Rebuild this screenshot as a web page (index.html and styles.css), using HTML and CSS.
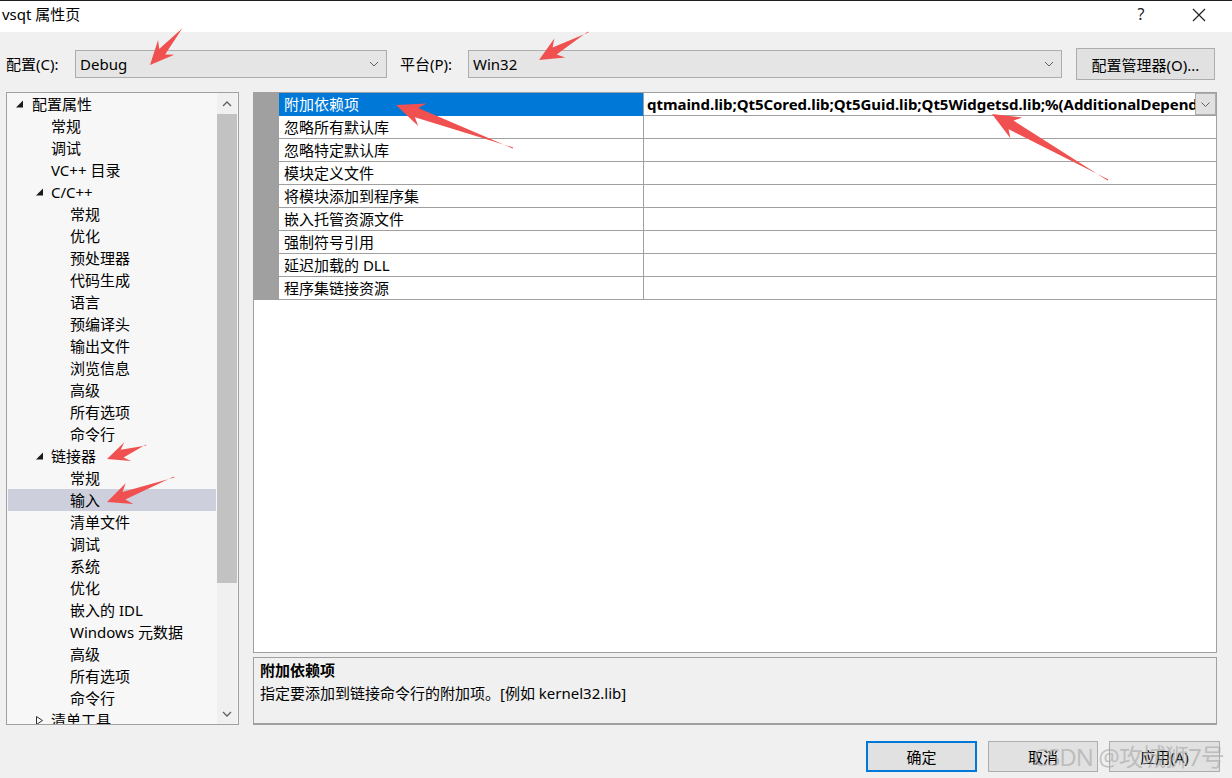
FILE: index.html
```html
<!DOCTYPE html>
<html lang="zh-CN">
<head>
<meta charset="utf-8">
<title>vsqt 属性页</title>
<link rel="stylesheet" href="styles.css">
</head>
<body>
<div class="titlebar">
  <span class="title">vsqt 属性页</span>
  <span class="help">?</span>
  <svg class="close" width="14" height="14" viewBox="0 0 14 14"><path d="M1 1L13 13M13 1L1 13" stroke="#222" stroke-width="1.2" fill="none"/></svg>
</div>

<div class="config-row">
  <span class="lbl lbl-config">配置(C):</span>
  <div class="combo combo-config"><span>Debug</span><svg class="chev" width="10" height="6" viewBox="0 0 10 6"><path d="M1 1L5 5L9 1" stroke="#606060" fill="none"/></svg></div>
  <span class="lbl lbl-platform">平台(P):</span>
  <div class="combo combo-platform"><span>Win32</span><svg class="chev" width="10" height="6" viewBox="0 0 10 6"><path d="M1 1L5 5L9 1" stroke="#606060" fill="none"/></svg></div>
  <button class="btn btn-manager">配置管理器(O)...</button>
</div>

<div class="main">
  <div class="tree">
    <ul class="tree-list">
      <li class="l0"><svg class="tw" width="16" height="8" viewBox="0 0 16 8"><path d="M7 0.5L7 7.5L0 7.5Z" fill="#1a1a1a"/></svg>配置属性</li>
      <li class="l1">常规</li>
      <li class="l1">调试</li>
      <li class="l1">VC++ 目录</li>
      <li class="l1t"><svg class="tw" width="15" height="8" viewBox="0 0 15 8"><path d="M7 0.5L7 7.5L0 7.5Z" fill="#1a1a1a"/></svg>C/C++</li>
      <li class="l2">常规</li>
      <li class="l2">优化</li>
      <li class="l2">预处理器</li>
      <li class="l2">代码生成</li>
      <li class="l2">语言</li>
      <li class="l2">预编译头</li>
      <li class="l2">输出文件</li>
      <li class="l2">浏览信息</li>
      <li class="l2">高级</li>
      <li class="l2">所有选项</li>
      <li class="l2">命令行</li>
      <li class="l1t"><svg class="tw" width="15" height="8" viewBox="0 0 15 8"><path d="M7 0.5L7 7.5L0 7.5Z" fill="#1a1a1a"/></svg>链接器</li>
      <li class="l2">常规</li>
      <li class="l2 selected">输入</li>
      <li class="l2">清单文件</li>
      <li class="l2">调试</li>
      <li class="l2">系统</li>
      <li class="l2">优化</li>
      <li class="l2">嵌入的 IDL</li>
      <li class="l2">Windows 元数据</li>
      <li class="l2">高级</li>
      <li class="l2">所有选项</li>
      <li class="l2">命令行</li>
      <li class="l1t"><svg class="tw" width="15" height="9" viewBox="0 0 15 9"><path d="M0.5 0.5L6.5 4.5L0.5 8.5Z" fill="none" stroke="#333"/></svg>清单工具</li>
    </ul>
    <div class="scrollbar">
      <div class="sb-btn"><svg width="10" height="6" viewBox="0 0 10 6"><path d="M1 5L5 1L9 5" stroke="#606060" stroke-width="1.3" fill="none"/></svg></div>
      <div class="sb-thumb"></div>
      <div class="sb-track"></div>
      <div class="sb-btn"><svg width="10" height="6" viewBox="0 0 10 6"><path d="M1 1L5 5L9 1" stroke="#606060" stroke-width="1.3" fill="none"/></svg></div>
    </div>
  </div>

  <div class="right">
    <div class="grid-panel">
      <div class="grid">
        <div class="row sel">
          <div class="gutter"></div>
          <div class="name">附加依赖项</div>
          <div class="value"><span class="val-text">qtmaind.lib;Qt5Cored.lib;Qt5Guid.lib;Qt5Widgetsd.lib;%(AdditionalDependencies)</span><span class="val-btn"><svg width="9" height="5" viewBox="0 0 9 5"><path d="M0.5 0.5L4.5 4.5L8.5 0.5" stroke="#606060" fill="none"/></svg></span></div>
        </div>
        <div class="row"><div class="gutter"></div><div class="name">忽略所有默认库</div><div class="value"></div></div>
        <div class="row"><div class="gutter"></div><div class="name">忽略特定默认库</div><div class="value"></div></div>
        <div class="row"><div class="gutter"></div><div class="name">模块定义文件</div><div class="value"></div></div>
        <div class="row"><div class="gutter"></div><div class="name">将模块添加到程序集</div><div class="value"></div></div>
        <div class="row"><div class="gutter"></div><div class="name">嵌入托管资源文件</div><div class="value"></div></div>
        <div class="row"><div class="gutter"></div><div class="name">强制符号引用</div><div class="value"></div></div>
        <div class="row"><div class="gutter"></div><div class="name">延迟加载的 DLL</div><div class="value"></div></div>
        <div class="row"><div class="gutter"></div><div class="name">程序集链接资源</div><div class="value"></div></div>
      </div>
    </div>
    <div class="desc">
      <div class="desc-title">附加依赖项</div>
      <div class="desc-text">指定要添加到链接命令行的附加项。[例如 kernel32.lib]</div>
    </div>
  </div>
</div>

<div class="footer">
  <button class="btn btn-ok">确定</button>
  <button class="btn btn-cancel">取消</button>
  <button class="btn btn-apply">应用(A)</button>
</div>

<div class="watermark">CSDN @攻城狮7号</div>

<svg class="annotations" width="1232" height="778" viewBox="0 0 1232 778">
  <g fill="#f0504f">
    <polygon points="182.5,28 181.5,29 159.2,49.0 158.1,39.9 150,65 174.3,54.7 165.1,54.4"/>
    <polygon points="588,31.5 588.5,32.5 552.6,47.6 554.3,38.6 539,60 565.3,57.6 556.6,54.6"/>
    <polygon points="146,444.5 146.3,445.5 120.7,449.8 124.3,442.2 107,459 131.1,461.0 123.5,457.4"/>
    <polygon points="174,476.5 174.3,477.5 122.5,492.0 125.7,483.3 107,502 133.4,503.9 125.3,499.4"/>
    <polygon points="513.3,147.5 512.7,148.5 418.3,107.9 426.4,103.4 396,105 418.2,126.0 414.9,117.3"/>
    <polygon points="1108.4,179.5 1107.6,180.5 1013.6,120.6 1022.2,117.4 992,114 1010.4,138.2 1008.6,129.2"/>
  </g>
</svg>
</body>
</html>
```

FILE: styles.css
```css
* { box-sizing: border-box; }

body {
  margin: 0;
  width: 1232px;
  height: 778px;
  overflow: hidden;
  position: relative;
  background: #f0f0f0;
  font-family: "Noto Sans", "Noto Sans CJK SC", sans-serif;
  font-size: 15px;
  color: #000;
}

/* title bar */
.titlebar {
  height: 32px;
  background: #fff;
  border-top: 1px solid #1e1e1e;
  display: flex;
  align-items: flex-start;
  padding: 2px 0 0 2px;
}
.title { flex: 1; line-height: 22px; }
.help { width: 20px; text-align: center; line-height: 22px; font-size: 16px; margin-right: 41px; color: #222; }
.close { margin-top: 5px; margin-right: 26px; }

/* configuration row */
.config-row {
  margin-top: 16px;
  height: 32px;
  display: flex;
  align-items: center;
  padding-left: 6px;
}
.lbl { line-height: 22px; }
.lbl-config { width: 69px; }
.lbl-platform { width: 68px; margin-left: 13px; }
.combo {
  height: 28px;
  border: 1px solid #adadad;
  background: #e5e5e5;
  display: flex;
  align-items: center;
  justify-content: space-between;
  padding: 0 7px 0 4px;
  line-height: 22px;
}
.combo-config { width: 312px; }
.combo-platform { width: 594px; }
.chev { flex: none; }

.btn {
  font-family: inherit;
  font-size: 15px;
  color: #000;
  background: #e1e1e1;
  border: 1px solid #adadad;
  padding: 0;
  margin: 0;
}
.btn-manager { width: 139px; height: 32px; margin-left: 14px; }

/* main */
.main {
  margin-top: 12px;
  height: 633px;
  display: flex;
  padding-left: 6px;
}

.tree {
  width: 233px;
  height: 633px;
  border: 1px solid #a0a0a0;
  background: #f7f7f7;
  display: flex;
  overflow: hidden;
}
.tree-list {
  list-style: none;
  margin: 0;
  padding: 0 0 0 1px;
  width: 209px;
  flex: none;
  overflow: hidden;
}
.tree-list li {
  height: 22px;
  line-height: 22px;
  white-space: nowrap;
  display: flex;
  align-items: center;
}
.tw { flex: none; }
.l0 { padding-left: 8px; }
.l1t { padding-left: 28px; }
.l1 { padding-left: 43px; }
.l2 { padding-left: 62px; }
.tree-list li.selected { background: #cdd0dc; }

.scrollbar {
  width: 20px;
  margin-left: 1px;
  display: flex;
  flex-direction: column;
  background: #f0f0f0;
}
.sb-btn {
  height: 21px;
  display: flex;
  align-items: center;
  justify-content: center;
  flex: none;
}
.sb-thumb { height: 469px; background: #c2c2c2; flex: none; }
.sb-track { flex: 1; }

.right {
  margin-left: 14px;
  width: 964px;
  display: flex;
  flex-direction: column;
}

.grid-panel {
  height: 561px;
  border: 1px solid #a0a0a0;
  background: #fff;
}
.row {
  display: grid;
  grid-template-columns: 25px 365px 572px;
  height: 23px;
}
.gutter { background: #a0a0a0; }
.name {
  border-right: 1px solid #a0a0a0;
  border-bottom: 1px solid #a0a0a0;
  padding-left: 5px;
  line-height: 22px;
  white-space: nowrap;
}
.value {
  border-bottom: 1px solid #a0a0a0;
  display: flex;
  align-items: stretch;
  overflow: hidden;
}
.row.sel .name { background: #0078d7; color: #fff; border-bottom-color: #0078d7; }
.val-text {
  flex: 1;
  overflow: hidden;
  white-space: nowrap;
  font-weight: bold;
  line-height: 22px;
  padding-left: 3px;
  letter-spacing: -0.05px;
}
.val-btn {
  width: 21px;
  flex: none;
  background: #e1e1e1;
  border: 1px solid #adadad;
  display: flex;
  align-items: center;
  justify-content: center;
}

.desc {
  margin-top: 4px;
  height: 68px;
  border: 1px solid #a0a0a0;
  border-bottom-width: 2px;
  background: #f0f0f0;
  padding: 1px 0 0 6px;
}
.desc-title { font-weight: bold; line-height: 22px; }
.desc-text { line-height: 24px; }

/* footer buttons */
.footer {
  margin-top: 16px;
  display: flex;
  justify-content: flex-end;
  gap: 11px;
  padding-right: 12px;
}
.footer .btn { height: 31px; width: 110px; }
.btn-ok { width: 111px !important; border: 2px solid #0078d7; }
.btn-apply { width: 111px !important; }

.watermark {
  position: absolute;
  left: 1033px;
  top: 740px;
  font-size: 24px;
  line-height: 34px;
  color: rgba(165, 165, 165, 0.6);
  white-space: nowrap;
  letter-spacing: -1px;
}

.annotations {
  position: absolute;
  left: 0;
  top: 0;
  pointer-events: none;
}
```
